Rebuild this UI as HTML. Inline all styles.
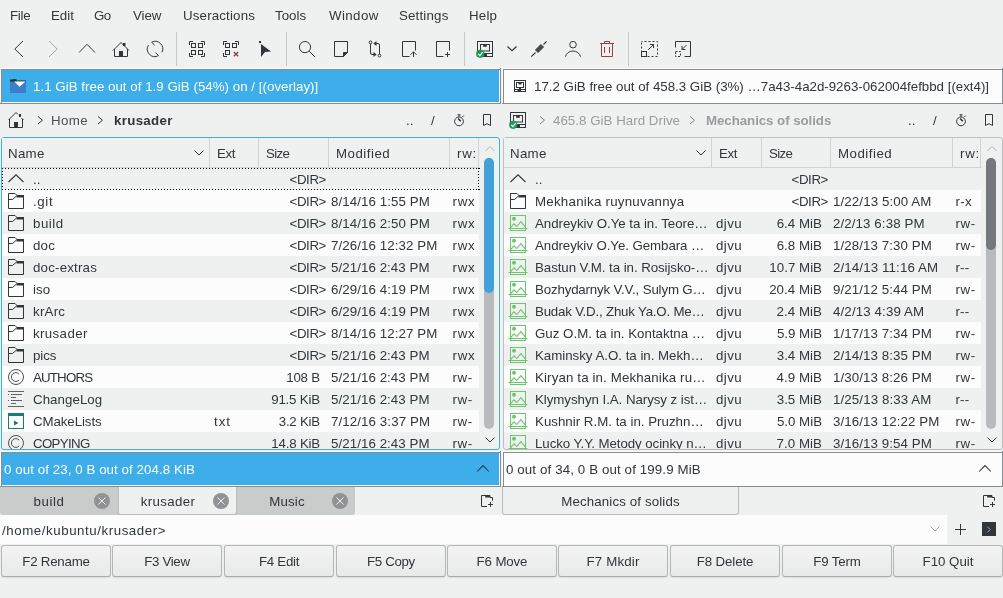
<!DOCTYPE html>
<html><head><meta charset="utf-8">
<style>
html,body{margin:0;padding:0;}
body{width:1003px;height:598px;overflow:hidden;position:relative;background:#eff1f0;
font-family:"Liberation Sans",sans-serif;font-size:13.3px;color:#31363b;}
.t{position:absolute;white-space:nowrap;line-height:16px;margin-top:1px;}
#root{position:absolute;left:0;top:0;width:1003px;height:598px;will-change:transform;}
.r{text-align:right;}
svg{position:absolute;overflow:visible;}
</style></head><body><div id="root">

<div class="t" style="left:10px;top:7px;letter-spacing:-0.295px;">File</div>
<div class="t" style="left:51px;top:7px;letter-spacing:-0.002px;">Edit</div>
<div class="t" style="left:94px;top:7px;letter-spacing:-0.681px;">Go</div>
<div class="t" style="left:133px;top:7px;letter-spacing:-0.080px;">View</div>
<div class="t" style="left:183px;top:7px;letter-spacing:0.167px;">Useractions</div>
<div class="t" style="left:275px;top:7px;letter-spacing:0.020px;">Tools</div>
<div class="t" style="left:329px;top:7px;letter-spacing:0.396px;">Window</div>
<div class="t" style="left:399px;top:7px;letter-spacing:0.178px;">Settings</div>
<div class="t" style="left:469px;top:7px;letter-spacing:0.211px;">Help</div>
<svg style="left:0;top:0" width="1003" height="598"><path d="M23 41 L14.8 49 L23 57" fill="none" stroke="#31363b" stroke-width="1"/><path d="M49 41 L57.2 49 L49 57" fill="none" stroke="#a3a6a8" stroke-width="1"/><path d="M79 52.5 L87 44.3 L95 52.5" fill="none" stroke="#31363b" stroke-width="1"/><path d="M113 50.5 L121 42.5 L129 50.5 M114.5 49 V56.5 H127.5 V49" fill="none" stroke="#31363b" stroke-width="1"/><rect x="119" y="51" width="4" height="6" fill="#31363b"/><rect x="123" y="43" width="2.5" height="3" fill="#31363b"/><path d="M148.4 45.2 A7.5 7.5 0 0 0 158.5 55.6 L155.6 52.6 M161.9 52.3 A7.5 7.5 0 0 0 151.6 42.3 L154.5 45" fill="none" stroke="#31363b" stroke-width="1"/><rect x="176" y="32" width="1" height="34" fill="#c5c7c9"/><rect x="286" y="32" width="1" height="34" fill="#c5c7c9"/><rect x="464" y="32" width="1" height="34" fill="#c5c7c9"/><rect x="628" y="32" width="1" height="34" fill="#c5c7c9"/><path d="M189.5 45 V41.5 H193 M201 41.5 H204.5 V45 M189.5 53 V56.5 H193" fill="none" stroke="#31363b" stroke-width="1"/><path d="M201 56.5 H204.5 V53" fill="none" stroke="#31363b" stroke-width="1"/><rect x="191.5" y="43.5" width="4" height="4" fill="none" stroke="#31363b" stroke-width="1"/><rect x="198.5" y="43.5" width="4" height="4" fill="none" stroke="#31363b" stroke-width="1"/><rect x="191.5" y="50.5" width="4" height="4" fill="none" stroke="#31363b" stroke-width="1"/><rect x="198.5" y="50.5" width="4" height="4" fill="none" stroke="#31363b" stroke-width="1"/><path d="M223.5 45 V41.5 H227 M235 41.5 H238.5 V45 M223.5 53 V56.5 H227" fill="none" stroke="#31363b" stroke-width="1"/><rect x="225.5" y="43.5" width="4" height="4" fill="none" stroke="#31363b" stroke-width="1"/><rect x="232.5" y="43.5" width="4" height="4" fill="none" stroke="#31363b" stroke-width="1"/><rect x="225.5" y="50.5" width="4" height="4" fill="none" stroke="#31363b" stroke-width="1"/><path d="M233.8 52 L238.2 56.2 M238.2 52 L233.8 56.2" stroke="#9b3139" stroke-width="1.2"/><rect x="259" y="41" width="2" height="2" fill="#31363b"/><path d="M261 44 L271 51.5 L265 52 L261 57 Z" fill="#31363b"/><circle cx="305" cy="47.1" r="5.6" fill="none" stroke="#31363b" stroke-width="1"/><path d="M309.2 51.2 L315 57" fill="none" stroke="#31363b" stroke-width="1"/><path d="M334.5 41.5 H347.5 V52.5 L343.5 56.5 H334.5 Z" fill="none" stroke="#31363b" stroke-width="1"/><path d="M343.5 56.5 V52.5 H347.5 Z" fill="#31363b" stroke="#31363b" stroke-width="1"/><circle cx="370.5" cy="42.3" r="1.4" fill="none" stroke="#31363b" stroke-width="1"/><path d="M370.5 43.8 V53 Q370.5 54.5 372 54.5 H374" fill="none" stroke="#31363b" stroke-width="1"/><path d="M373.5 52 L376.7 54.5 L373.5 57 Z" fill="#31363b"/><circle cx="379.5" cy="55.6" r="1.4" fill="none" stroke="#31363b" stroke-width="1"/><path d="M379.5 54.2 V45 Q379.5 43.5 378 43.5 H376" fill="none" stroke="#31363b" stroke-width="1"/><path d="M376.5 41 L373.3 43.5 L376.5 46 Z" fill="#31363b"/><path d="M409.5 56.5 H402.5 V41.5 H415.5 V50.5 M413.5 57 V51.8 M410.5 54.8 L413.5 51.8 L416.5 54.8" fill="none" stroke="#31363b" stroke-width="1"/><path d="M443.5 56.5 H436.5 V41.5 H449.5 V50.5 M447.5 52 V57 M445 54.5 H450" fill="none" stroke="#31363b" stroke-width="1"/><rect x="477.5" y="41.5" width="15" height="15" fill="none" stroke="#31363b" stroke-width="1"/><rect x="480.5" y="44.5" width="9" height="6.5" fill="none" stroke="#31363b" stroke-width="1"/><rect x="483.2" y="44.5" width="3.6" height="2.3" fill="#31363b"/><path d="M477.5 53.5 H492.5" fill="none" stroke="#31363b" stroke-width="1"/><rect x="482" y="54" width="5" height="2" fill="#31363b"/><circle cx="480.2" cy="53.8" r="4.1" fill="#1e9a58"/><path d="M478.2 53.9 L479.9 55.6 L482.6 52.2" fill="none" stroke="#f4f4f4" stroke-width="1.3"/><path d="M507.5 46.5 L512 50.7 L516.5 46.5" fill="none" stroke="#31363b" stroke-width="1.2"/><path d="M531.3 56.7 L535.5 52.5 M543.5 44.5 L546.6 41.3" fill="none" stroke="#31363b" stroke-width="1.1"/><path d="M544.1 47.1 L540.9 43.9 L534.9 49.9 L538.1 53.1 Z" fill="#474b4f"/><circle cx="573" cy="44.7" r="3.3" fill="none" stroke="#31363b" stroke-width="1"/><path d="M565.5 56.7 A7.6 6.8 0 0 1 580.5 56.7" fill="none" stroke="#31363b" stroke-width="1"/><path d="M600 43.5 H614 M604.5 43.5 V41.5 H609.5 V43.5 M601.5 43.5 V56.5 H612.5 V43.5 M604.5 47 V53 M609.5 47 V53" fill="none" stroke="#a0394a" stroke-width="1"/><path d="M641.5 41.5 H657.5 V56.5 H641.5 Z" fill="none" stroke="#31363b" stroke-dasharray="2 2" stroke-dashoffset="1"/><rect x="641.5" y="51.5" width="5" height="5" fill="none" stroke="#31363b" stroke-width="1"/><path d="M648.3 49.7 L653.3 44.7 M650 44.5 H653.5 V48" fill="none" stroke="#31363b" stroke-width="1"/><path d="M675.5 47.5 V41.5 H690.5 V56.5 H684.5" fill="none" stroke="#31363b" stroke-width="1"/><rect x="675.5" y="51.5" width="5" height="5" fill="none" stroke="#31363b" stroke-dasharray="2 1.5"/><path d="M686.5 45 L682 49.5 M682 46 V49.5 H685.5" fill="none" stroke="#31363b" stroke-width="1"/></svg>
<div style="position:absolute;left:0px;top:68px;width:501px;height:36px;background:#fcfcfc"></div>
<div style="position:absolute;left:500px;top:68px;width:1px;height:36px;background:#898c8f"></div>
<div style="position:absolute;left:0px;top:103px;width:501px;height:1px;background:#898c8f"></div>
<div style="position:absolute;left:1px;top:69px;width:499px;height:1px;background:#898c8f"></div>
<div style="position:absolute;left:1px;top:69px;width:1px;height:34px;background:#898c8f"></div>
<div style="position:absolute;left:2px;top:70px;width:497px;height:32px;background:#3daee9"></div>
<svg style="left:0;top:0" width="1003" height="598"><rect x="10" y="81" width="16" height="12" fill="#3b7ec9"/><rect x="10" y="79" width="6.5" height="2" fill="#1f3d3f"/><rect x="10" y="79" width="3" height="1" fill="#16806a"/><rect x="10" y="80.5" width="16" height="1" fill="#24282b"/><path d="M14.3 81.5 H25.5 L19.6 86.8 Z" fill="#fcfcfc"/></svg>
<div class="t" style="left:33px;top:78px;letter-spacing:0.029px;color:#fcfcfc">1.1 GiB free out of 1.9 GiB (54%) on / [(overlay)]</div>
<div style="position:absolute;left:502px;top:68px;width:501px;height:36px;background:#fcfcfc"></div>
<div style="position:absolute;left:1002px;top:68px;width:1px;height:36px;background:#898c8f"></div>
<div style="position:absolute;left:502px;top:103px;width:501px;height:1px;background:#898c8f"></div>
<div style="position:absolute;left:503px;top:69px;width:499px;height:1px;background:#898c8f"></div>
<div style="position:absolute;left:503px;top:69px;width:1px;height:34px;background:#898c8f"></div>
<div style="position:absolute;left:504px;top:70px;width:497px;height:32px;background:#fcfcfc"></div>
<svg style="left:0;top:0" width="1003" height="598"><rect x="514.5" y="80.5" width="11" height="11" fill="none" stroke="#31363b" stroke-width="1"/><rect x="516.5" y="82.5" width="7" height="5" fill="none" stroke="#31363b" stroke-width="1"/><rect x="518.5" y="82.5" width="3" height="2" fill="#31363b"/><path d="M514.5 89.5 H525.5" fill="none" stroke="#31363b" stroke-width="1"/><rect x="517.5" y="90" width="3.5" height="1.5" fill="#31363b"/><path d="M519 88 L520 89 L521 88" fill="none" stroke="#31363b" stroke-width="1"/></svg>
<div class="t" style="left:534px;top:78px;letter-spacing:-0.004px;">17.2 GiB free out of 458.3 GiB (3%) …7a43-4a2d-9263-062004fefbbd [(ext4)]</div>
<svg style="left:0;top:0" width="1003" height="598"><path d="M8.5 120 L16 112.5 L18 114.5 M21.5 118 L23.5 120 M9.5 119 V127.5 H22.5 V119" fill="none" stroke="#31363b" stroke-width="1"/><rect x="14" y="122" width="4" height="6" fill="#31363b"/><rect x="19" y="114" width="2" height="3" fill="#31363b"/><path d="M38 116.5 L42.5 120.2 L38 124" fill="none" stroke="#31363b" stroke-width="1"/><path d="M98 116.5 L102.5 120.2 L98 124" fill="none" stroke="#31363b" stroke-width="1"/><circle cx="459" cy="121.4" r="4.4" fill="none" stroke="#31363b" stroke-width="1"/><path d="M457.5 114.8 H460.5 M459 114.8 V116.8 M462.3 117 L463.8 115.5" fill="none" stroke="#31363b" stroke-width="1"/><path d="M458.2 118.6 L460.8 121.2" stroke="#31363b" stroke-width="1.6"/><path d="M483.5 114.5 H490.5 V125.5 L487 123.7 L483.5 125.5 Z" fill="none" stroke="#31363b" stroke-width="1"/><circle cx="961" cy="121.4" r="4.4" fill="none" stroke="#31363b" stroke-width="1"/><path d="M959.5 114.8 H962.5 M961 114.8 V116.8 M964.3 117 L965.8 115.5" fill="none" stroke="#31363b" stroke-width="1"/><path d="M960.2 118.6 L962.8 121.2" stroke="#31363b" stroke-width="1.6"/><path d="M985.5 114.5 H992.5 V125.5 L989 123.7 L985.5 125.5 Z" fill="none" stroke="#31363b" stroke-width="1"/><rect x="510.5" y="112.5" width="15" height="15" fill="none" stroke="#31363b" stroke-width="1"/><rect x="513.5" y="115.5" width="9" height="6.5" fill="none" stroke="#31363b" stroke-width="1"/><rect x="516.2" y="115.5" width="3.6" height="2.3" fill="#31363b"/><path d="M510.5 124.5 H525.5" fill="none" stroke="#31363b" stroke-width="1"/><rect x="515" y="125" width="5" height="2" fill="#31363b"/><circle cx="513.2" cy="124.8" r="4.1" fill="#1e9a58"/><path d="M511.2 124.9 L512.9 126.6 L515.6 123.2" fill="none" stroke="#f4f4f4" stroke-width="1.3"/><path d="M540 116.5 L544.5 120.2 L540 124" fill="none" stroke="#7f8386"/><path d="M690 116.5 L694.5 120.2 L690 124" fill="none" stroke="#7f8386"/></svg>
<div class="t" style="left:51px;top:112px;letter-spacing:0.422px;color:#4a4f54">Home</div>
<div class="t" style="left:114px;top:112px;letter-spacing:0.314px;"><b>krusader</b></div>
<div class="t" style="left:406px;top:112px;letter-spacing:0.134px;">..</div>
<div class="t" style="left:431px;top:112px;letter-spacing:0.000px;">/</div>
<div class="t" style="left:553px;top:112px;letter-spacing:0.033px;color:#9a9d9f">465.8 GiB Hard Drive</div>
<div class="t" style="left:706px;top:112px;letter-spacing:-0.059px;color:#9a9d9f"><b>Mechanics of solids</b></div>
<div class="t" style="left:908px;top:112px;letter-spacing:0.134px;">..</div>
<div class="t" style="left:933px;top:112px;letter-spacing:0.000px;">/</div>
<div style="position:absolute;left:1px;top:137px;width:499px;height:313px;background:#eff1f0;border:1px solid #3daee9;box-sizing:border-box;border-radius:3px;"></div>
<div style="position:absolute;left:2px;top:138px;width:478px;height:30px;background:#eff1f0;"></div>
<div class="t" style="left:8px;top:145px;letter-spacing:0.313px;">Name</div>
<div style="position:absolute;left:209px;top:138px;width:1px;height:30px;background:#d1d3d4"></div>
<div class="t" style="left:217px;top:145px;letter-spacing:-0.388px;">Ext</div>
<div style="position:absolute;left:258px;top:138px;width:1px;height:30px;background:#d1d3d4"></div>
<div class="t" style="left:266px;top:145px;letter-spacing:-0.690px;">Size</div>
<div style="position:absolute;left:328px;top:138px;width:1px;height:30px;background:#d1d3d4"></div>
<div class="t" style="left:336px;top:145px;letter-spacing:0.496px;">Modified</div>
<div style="position:absolute;left:449px;top:138px;width:1px;height:30px;background:#d1d3d4"></div>
<div class="t" style="left:457px;top:145px;letter-spacing:0.699px;">rw:</div>
<div style="position:absolute;left:478px;top:138px;width:1px;height:30px;background:#d1d3d4"></div>
<svg style="left:194px;top:150px" width="10" height="6" viewBox="0 0 10 6" ><path d="M0.5 0.5 L5 5 L9.5 0.5" fill="none" stroke="#31363b" stroke-width="1"/></svg>
<div style="position:absolute;left:2px;top:167px;width:478px;height:1px;background:#d1d3d4"></div>
<svg style="left:485px;top:146px" width="10" height="6" viewBox="0 0 10 6" ><path d="M0.5 5 L5 0.5 L9.5 5" fill="none" stroke="#b4b6b8" stroke-width="1"/></svg>
<svg style="left:485px;top:437px" width="10" height="6" viewBox="0 0 10 6" ><path d="M0.5 0.5 L5 5 L9.5 0.5" fill="none" stroke="#31363b" stroke-width="1"/></svg>
<div style="position:absolute;left:484px;top:158px;width:10px;height:271px;background:#b9babe;border-radius:5px;"></div>
<div style="position:absolute;left:0;top:0;width:1003px;height:449px;overflow:hidden">
<div style="position:absolute;left:484px;top:158px;width:10px;height:135px;background:#42a2d7;border-radius:5px;"></div>
<svg style="left:8px;top:173px" width="16" height="10" viewBox="0 0 16 10" ><path d="M0.5 9 L8 1.8 L15.5 9" fill="none" stroke="#31363b" stroke-width="1.1"/></svg>
<div class="t" style="left:33px;top:171px;letter-spacing:0.134px;">..</div>
<div class="t r" style="left:259px;width:67px;top:171px;letter-spacing:-0.398px">&lt;DIR&gt;</div>
<div style="position:absolute;left:2px;top:190px;width:477px;height:22px;background:#fcfcfc;"></div>
<svg style="left:8px;top:193px" width="16" height="16" viewBox="0 0 16 16" ><path d="M0.5 15.5 V0.5 H7 L9 2.5 H15.5 V15.5 Z" fill="none" stroke="#31363b" stroke-width="1"/><rect x="8.5" y="2" width="7.5" height="2.5" fill="#31363b"/><path d="M8.5 3 L4.5 6.5 H0.5" fill="none" stroke="#31363b" stroke-width="1"/></svg>
<div class="t" style="left:33px;top:193px;letter-spacing:0.625px;">.git</div>
<div class="t r" style="left:259px;width:67px;top:193px;letter-spacing:-0.398px">&lt;DIR&gt;</div>
<div class="t" style="left:331px;top:193px;letter-spacing:0.088px;">8/14/16 1:55 PM</div>
<div class="t" style="left:452.5px;top:193px;letter-spacing:0.734px;">rwx</div>
<svg style="left:8px;top:215px" width="16" height="16" viewBox="0 0 16 16" ><path d="M0.5 15.5 V0.5 H7 L9 2.5 H15.5 V15.5 Z" fill="none" stroke="#31363b" stroke-width="1"/><rect x="8.5" y="2" width="7.5" height="2.5" fill="#31363b"/><path d="M8.5 3 L4.5 6.5 H0.5" fill="none" stroke="#31363b" stroke-width="1"/></svg>
<div class="t" style="left:33px;top:215px;letter-spacing:0.534px;">build</div>
<div class="t r" style="left:259px;width:67px;top:215px;letter-spacing:-0.398px">&lt;DIR&gt;</div>
<div class="t" style="left:331px;top:215px;letter-spacing:0.088px;">8/14/16 2:50 PM</div>
<div class="t" style="left:452.5px;top:215px;letter-spacing:0.734px;">rwx</div>
<div style="position:absolute;left:2px;top:234px;width:477px;height:22px;background:#fcfcfc;"></div>
<svg style="left:8px;top:237px" width="16" height="16" viewBox="0 0 16 16" ><path d="M0.5 15.5 V0.5 H7 L9 2.5 H15.5 V15.5 Z" fill="none" stroke="#31363b" stroke-width="1"/><rect x="8.5" y="2" width="7.5" height="2.5" fill="#31363b"/><path d="M8.5 3 L4.5 6.5 H0.5" fill="none" stroke="#31363b" stroke-width="1"/></svg>
<div class="t" style="left:33px;top:237px;letter-spacing:0.211px;">doc</div>
<div class="t r" style="left:259px;width:67px;top:237px;letter-spacing:-0.398px">&lt;DIR&gt;</div>
<div class="t" style="left:331px;top:237px;letter-spacing:0.096px;">7/26/16 12:32 PM</div>
<div class="t" style="left:452.5px;top:237px;letter-spacing:0.734px;">rwx</div>
<svg style="left:8px;top:259px" width="16" height="16" viewBox="0 0 16 16" ><path d="M0.5 15.5 V0.5 H7 L9 2.5 H15.5 V15.5 Z" fill="none" stroke="#31363b" stroke-width="1"/><rect x="8.5" y="2" width="7.5" height="2.5" fill="#31363b"/><path d="M8.5 3 L4.5 6.5 H0.5" fill="none" stroke="#31363b" stroke-width="1"/></svg>
<div class="t" style="left:33px;top:259px;letter-spacing:0.192px;">doc-extras</div>
<div class="t r" style="left:259px;width:67px;top:259px;letter-spacing:-0.398px">&lt;DIR&gt;</div>
<div class="t" style="left:331px;top:259px;letter-spacing:0.072px;">5/21/16 2:43 PM</div>
<div class="t" style="left:452.5px;top:259px;letter-spacing:0.734px;">rwx</div>
<div style="position:absolute;left:2px;top:278px;width:477px;height:22px;background:#fcfcfc;"></div>
<svg style="left:8px;top:281px" width="16" height="16" viewBox="0 0 16 16" ><path d="M0.5 15.5 V0.5 H7 L9 2.5 H15.5 V15.5 Z" fill="none" stroke="#31363b" stroke-width="1"/><rect x="8.5" y="2" width="7.5" height="2.5" fill="#31363b"/><path d="M8.5 3 L4.5 6.5 H0.5" fill="none" stroke="#31363b" stroke-width="1"/></svg>
<div class="t" style="left:33px;top:281px;letter-spacing:0.088px;">iso</div>
<div class="t r" style="left:259px;width:67px;top:281px;letter-spacing:-0.398px">&lt;DIR&gt;</div>
<div class="t" style="left:331px;top:281px;letter-spacing:0.089px;">6/29/16 4:19 PM</div>
<div class="t" style="left:452.5px;top:281px;letter-spacing:0.734px;">rwx</div>
<svg style="left:8px;top:303px" width="16" height="16" viewBox="0 0 16 16" ><path d="M0.5 15.5 V0.5 H7 L9 2.5 H15.5 V15.5 Z" fill="none" stroke="#31363b" stroke-width="1"/><rect x="8.5" y="2" width="7.5" height="2.5" fill="#31363b"/><path d="M8.5 3 L4.5 6.5 H0.5" fill="none" stroke="#31363b" stroke-width="1"/></svg>
<div class="t" style="left:33px;top:303px;letter-spacing:0.228px;">krArc</div>
<div class="t r" style="left:259px;width:67px;top:303px;letter-spacing:-0.398px">&lt;DIR&gt;</div>
<div class="t" style="left:331px;top:303px;letter-spacing:0.089px;">6/29/16 4:19 PM</div>
<div class="t" style="left:452.5px;top:303px;letter-spacing:0.734px;">rwx</div>
<div style="position:absolute;left:2px;top:322px;width:477px;height:22px;background:#fcfcfc;"></div>
<svg style="left:8px;top:325px" width="16" height="16" viewBox="0 0 16 16" ><path d="M0.5 15.5 V0.5 H7 L9 2.5 H15.5 V15.5 Z" fill="none" stroke="#31363b" stroke-width="1"/><rect x="8.5" y="2" width="7.5" height="2.5" fill="#31363b"/><path d="M8.5 3 L4.5 6.5 H0.5" fill="none" stroke="#31363b" stroke-width="1"/></svg>
<div class="t" style="left:33px;top:325px;letter-spacing:0.376px;">krusader</div>
<div class="t r" style="left:259px;width:67px;top:325px;letter-spacing:-0.398px">&lt;DIR&gt;</div>
<div class="t" style="left:331px;top:325px;letter-spacing:0.085px;">8/14/16 12:27 PM</div>
<div class="t" style="left:452.5px;top:325px;letter-spacing:0.734px;">rwx</div>
<svg style="left:8px;top:347px" width="16" height="16" viewBox="0 0 16 16" ><path d="M0.5 15.5 V0.5 H7 L9 2.5 H15.5 V15.5 Z" fill="none" stroke="#31363b" stroke-width="1"/><rect x="8.5" y="2" width="7.5" height="2.5" fill="#31363b"/><path d="M8.5 3 L4.5 6.5 H0.5" fill="none" stroke="#31363b" stroke-width="1"/></svg>
<div class="t" style="left:33px;top:347px;letter-spacing:-0.063px;">pics</div>
<div class="t r" style="left:259px;width:67px;top:347px;letter-spacing:-0.398px">&lt;DIR&gt;</div>
<div class="t" style="left:331px;top:347px;letter-spacing:0.072px;">5/21/16 2:43 PM</div>
<div class="t" style="left:452.5px;top:347px;letter-spacing:0.734px;">rwx</div>
<div style="position:absolute;left:2px;top:366px;width:477px;height:22px;background:#fcfcfc;"></div>
<svg style="left:8px;top:369px" width="16" height="16" viewBox="0 0 16 16" ><circle cx="8" cy="8" r="7.5" fill="none" stroke="#4d5256" stroke-width="1"/><path d="M11.1 5.1 A4.4 4.4 0 1 0 11.1 10.9" fill="none" stroke="#4d5256" stroke-width="1"/></svg>
<div class="t" style="left:33px;top:369px;letter-spacing:-0.826px;">AUTHORS</div>
<div class="t r" style="left:259px;width:61px;top:369px;letter-spacing:-0.191px">108 B</div>
<div class="t" style="left:331px;top:369px;letter-spacing:0.072px;">5/21/16 2:43 PM</div>
<div class="t" style="left:452.5px;top:369px;letter-spacing:0.580px;">rw-</div>
<svg style="left:8px;top:391px" width="16" height="16" viewBox="0 0 16 16" ><path d="M0 0.5 H16 M3 3.5 H14 M3 6.5 H8 M3 9.5 H14 M3 12.5 H8 M0 15.5 H16" stroke="#5f6367" stroke-width="1"/><path d="M0 3.5 H1 M0 9.5 H1" stroke="#5f6367" stroke-width="1"/></svg>
<div class="t" style="left:33px;top:391px;letter-spacing:0.054px;">ChangeLog</div>
<div class="t r" style="left:259px;width:61px;top:391px;letter-spacing:-0.183px">91.5 KiB</div>
<div class="t" style="left:331px;top:391px;letter-spacing:0.072px;">5/21/16 2:43 PM</div>
<div class="t" style="left:452.5px;top:391px;letter-spacing:0.580px;">rw-</div>
<div style="position:absolute;left:2px;top:410px;width:477px;height:22px;background:#fcfcfc;"></div>
<svg style="left:8px;top:413px" width="16" height="16" viewBox="0 0 16 16" ><rect x="0.5" y="0.5" width="15" height="15" fill="none" stroke="#177c6a" stroke-width="1"/><rect x="0" y="0" width="16" height="3" fill="#177c6a"/><path d="M6 7.5 L10.5 10 L6 12.5 Z" fill="#177c6a"/></svg>
<div class="t" style="left:33px;top:413px;letter-spacing:-0.090px;">CMakeLists</div>
<div class="t" style="left:214px;top:413px;letter-spacing:1.014px;">txt</div>
<div class="t r" style="left:259px;width:61px;top:413px;letter-spacing:-0.229px">3.2 KiB</div>
<div class="t" style="left:331px;top:413px;letter-spacing:0.100px;">7/12/16 3:37 PM</div>
<div class="t" style="left:452.5px;top:413px;letter-spacing:0.580px;">rw-</div>
<svg style="left:8px;top:435px" width="16" height="16" viewBox="0 0 16 16" ><circle cx="8" cy="8" r="7.5" fill="none" stroke="#4d5256" stroke-width="1"/><path d="M11.1 5.1 A4.4 4.4 0 1 0 11.1 10.9" fill="none" stroke="#4d5256" stroke-width="1"/></svg>
<div class="t" style="left:33px;top:435px;letter-spacing:-0.680px;">COPYING</div>
<div class="t r" style="left:259px;width:61px;top:435px;letter-spacing:-0.200px">14.8 KiB</div>
<div class="t" style="left:331px;top:435px;letter-spacing:0.072px;">5/21/16 2:43 PM</div>
<div class="t" style="left:452.5px;top:435px;letter-spacing:0.580px;">rw-</div>
</div>
<svg style="left:0;top:0" width="1003" height="598"><path d="M2 168.5 H480 M2 189.5 H480 M2.5 168 V190 M478.5 168 V190" fill="none" stroke="#000" stroke-width="1" stroke-dasharray="1 2"/></svg>
<div style="position:absolute;left:503px;top:137px;width:500px;height:313px;background:#eff1f0;border:1px solid #bcbebf;box-sizing:border-box;border-radius:3px;"></div>
<div style="position:absolute;left:504px;top:138px;width:478px;height:30px;background:#eff1f0;"></div>
<div class="t" style="left:510px;top:145px;letter-spacing:0.313px;">Name</div>
<div style="position:absolute;left:711px;top:138px;width:1px;height:30px;background:#d1d3d4"></div>
<div class="t" style="left:719px;top:145px;letter-spacing:-0.388px;">Ext</div>
<div style="position:absolute;left:761px;top:138px;width:1px;height:30px;background:#d1d3d4"></div>
<div class="t" style="left:769px;top:145px;letter-spacing:-0.690px;">Size</div>
<div style="position:absolute;left:830px;top:138px;width:1px;height:30px;background:#d1d3d4"></div>
<div class="t" style="left:838px;top:145px;letter-spacing:0.496px;">Modified</div>
<div style="position:absolute;left:952px;top:138px;width:1px;height:30px;background:#d1d3d4"></div>
<div class="t" style="left:960px;top:145px;letter-spacing:0.699px;">rw:</div>
<div style="position:absolute;left:980px;top:138px;width:1px;height:30px;background:#d1d3d4"></div>
<svg style="left:696px;top:150px" width="10" height="6" viewBox="0 0 10 6" ><path d="M0.5 0.5 L5 5 L9.5 0.5" fill="none" stroke="#31363b" stroke-width="1"/></svg>
<div style="position:absolute;left:504px;top:167px;width:478px;height:1px;background:#d1d3d4"></div>
<svg style="left:987px;top:146px" width="10" height="6" viewBox="0 0 10 6" ><path d="M0.5 5 L5 0.5 L9.5 5" fill="none" stroke="#b4b6b8" stroke-width="1"/></svg>
<svg style="left:987px;top:437px" width="10" height="6" viewBox="0 0 10 6" ><path d="M0.5 0.5 L5 5 L9.5 0.5" fill="none" stroke="#31363b" stroke-width="1"/></svg>
<div style="position:absolute;left:986px;top:158px;width:10px;height:271px;background:#b9babe;border-radius:5px;"></div>
<div style="position:absolute;left:0;top:0;width:1003px;height:449px;overflow:hidden">
<div style="position:absolute;left:986px;top:158px;width:10px;height:92px;background:#74787e;border-radius:5px;"></div>
<svg style="left:510px;top:173px" width="16" height="10" viewBox="0 0 16 10" ><path d="M0.5 9 L8 1.8 L15.5 9" fill="none" stroke="#31363b" stroke-width="1.1"/></svg>
<div class="t" style="left:535px;top:171px;letter-spacing:0.134px;">..</div>
<div class="t r" style="left:762px;width:66px;top:171px;letter-spacing:-0.398px">&lt;DIR&gt;</div>
<div style="position:absolute;left:504px;top:190px;width:477px;height:22px;background:#fcfcfc;"></div>
<svg style="left:510px;top:193px" width="16" height="16" viewBox="0 0 16 16" ><path d="M0.5 15.5 V0.5 H7 L9 2.5 H15.5 V15.5 Z" fill="none" stroke="#31363b" stroke-width="1"/><rect x="8.5" y="2" width="7.5" height="2.5" fill="#31363b"/><path d="M8.5 3 L4.5 6.5 H0.5" fill="none" stroke="#31363b" stroke-width="1"/></svg>
<div class="t" style="left:535px;top:193px;letter-spacing:0.250px;">Mekhanika ruynuvannya</div>
<div class="t r" style="left:762px;width:66px;top:193px;letter-spacing:-0.398px">&lt;DIR&gt;</div>
<div class="t" style="left:833px;top:193px;letter-spacing:0.113px;">1/22/13 5:00 AM</div>
<div class="t" style="left:955.5px;top:193px;letter-spacing:0.306px;">r-x</div>
<svg style="left:510px;top:215px" width="16" height="16" viewBox="0 0 16 16" ><rect x="0.5" y="0.5" width="15" height="15" fill="none" stroke="#6fc46f" stroke-width="1"/><circle cx="4" cy="3.8" r="2" fill="#6fc46f"/><path d="M0.5 12.8 L3.9 8.8 L6.8 11.5 L10.9 6.6 L15.5 12.2" fill="none" stroke="#6fc46f" stroke-width="1.1"/><path d="M-1.5 13.5 H17.5" stroke="#6fc46f" stroke-width="1"/></svg>
<div class="t" style="left:535px;top:215px;letter-spacing:-0.040px;">Andreykiv O.Ye ta in. Teore…</div>
<div class="t" style="left:716px;top:215px;letter-spacing:0.403px;">djvu</div>
<div class="t r" style="left:762px;width:60px;top:215px;letter-spacing:0.034px">6.4 MiB</div>
<div class="t" style="left:833px;top:215px;letter-spacing:0.100px;">2/2/13 6:38 PM</div>
<div class="t" style="left:955.5px;top:215px;letter-spacing:0.580px;">rw-</div>
<div style="position:absolute;left:504px;top:234px;width:477px;height:22px;background:#fcfcfc;"></div>
<svg style="left:510px;top:237px" width="16" height="16" viewBox="0 0 16 16" ><rect x="0.5" y="0.5" width="15" height="15" fill="none" stroke="#6fc46f" stroke-width="1"/><circle cx="4" cy="3.8" r="2" fill="#6fc46f"/><path d="M0.5 12.8 L3.9 8.8 L6.8 11.5 L10.9 6.6 L15.5 12.2" fill="none" stroke="#6fc46f" stroke-width="1.1"/><path d="M-1.5 13.5 H17.5" stroke="#6fc46f" stroke-width="1"/></svg>
<div class="t" style="left:535px;top:237px;letter-spacing:-0.068px;">Andreykiv O.Ye. Gembara …</div>
<div class="t" style="left:716px;top:237px;letter-spacing:0.403px;">djvu</div>
<div class="t r" style="left:762px;width:60px;top:237px;letter-spacing:0.034px">6.8 MiB</div>
<div class="t" style="left:833px;top:237px;letter-spacing:0.082px;">1/28/13 7:30 PM</div>
<div class="t" style="left:955.5px;top:237px;letter-spacing:0.580px;">rw-</div>
<svg style="left:510px;top:259px" width="16" height="16" viewBox="0 0 16 16" ><rect x="0.5" y="0.5" width="15" height="15" fill="none" stroke="#6fc46f" stroke-width="1"/><circle cx="4" cy="3.8" r="2" fill="#6fc46f"/><path d="M0.5 12.8 L3.9 8.8 L6.8 11.5 L10.9 6.6 L15.5 12.2" fill="none" stroke="#6fc46f" stroke-width="1.1"/><path d="M-1.5 13.5 H17.5" stroke="#6fc46f" stroke-width="1"/></svg>
<div class="t" style="left:535px;top:259px;letter-spacing:-0.068px;">Bastun V.M. ta in. Rosijsko-…</div>
<div class="t" style="left:716px;top:259px;letter-spacing:0.403px;">djvu</div>
<div class="t r" style="left:762px;width:60px;top:259px;letter-spacing:0.020px">10.7 MiB</div>
<div class="t" style="left:833px;top:259px;letter-spacing:0.121px;">2/14/13 11:16 AM</div>
<div class="t" style="left:955.5px;top:259px;letter-spacing:0.152px;">r--</div>
<div style="position:absolute;left:504px;top:278px;width:477px;height:22px;background:#fcfcfc;"></div>
<svg style="left:510px;top:281px" width="16" height="16" viewBox="0 0 16 16" ><rect x="0.5" y="0.5" width="15" height="15" fill="none" stroke="#6fc46f" stroke-width="1"/><circle cx="4" cy="3.8" r="2" fill="#6fc46f"/><path d="M0.5 12.8 L3.9 8.8 L6.8 11.5 L10.9 6.6 L15.5 12.2" fill="none" stroke="#6fc46f" stroke-width="1.1"/><path d="M-1.5 13.5 H17.5" stroke="#6fc46f" stroke-width="1"/></svg>
<div class="t" style="left:535px;top:281px;letter-spacing:-0.164px;">Bozhydarnyk V.V., Sulym G…</div>
<div class="t" style="left:716px;top:281px;letter-spacing:0.403px;">djvu</div>
<div class="t r" style="left:762px;width:60px;top:281px;letter-spacing:0.047px">20.4 MiB</div>
<div class="t" style="left:833px;top:281px;letter-spacing:0.090px;">9/21/12 5:44 PM</div>
<div class="t" style="left:955.5px;top:281px;letter-spacing:0.580px;">rw-</div>
<svg style="left:510px;top:303px" width="16" height="16" viewBox="0 0 16 16" ><rect x="0.5" y="0.5" width="15" height="15" fill="none" stroke="#6fc46f" stroke-width="1"/><circle cx="4" cy="3.8" r="2" fill="#6fc46f"/><path d="M0.5 12.8 L3.9 8.8 L6.8 11.5 L10.9 6.6 L15.5 12.2" fill="none" stroke="#6fc46f" stroke-width="1.1"/><path d="M-1.5 13.5 H17.5" stroke="#6fc46f" stroke-width="1"/></svg>
<div class="t" style="left:535px;top:303px;letter-spacing:-0.204px;">Budak V.D., Zhuk Ya.O. Me…</div>
<div class="t" style="left:716px;top:303px;letter-spacing:0.403px;">djvu</div>
<div class="t r" style="left:762px;width:60px;top:303px;letter-spacing:0.048px">2.4 MiB</div>
<div class="t" style="left:833px;top:303px;letter-spacing:0.133px;">4/2/13 4:39 AM</div>
<div class="t" style="left:955.5px;top:303px;letter-spacing:0.152px;">r--</div>
<div style="position:absolute;left:504px;top:322px;width:477px;height:22px;background:#fcfcfc;"></div>
<svg style="left:510px;top:325px" width="16" height="16" viewBox="0 0 16 16" ><rect x="0.5" y="0.5" width="15" height="15" fill="none" stroke="#6fc46f" stroke-width="1"/><circle cx="4" cy="3.8" r="2" fill="#6fc46f"/><path d="M0.5 12.8 L3.9 8.8 L6.8 11.5 L10.9 6.6 L15.5 12.2" fill="none" stroke="#6fc46f" stroke-width="1.1"/><path d="M-1.5 13.5 H17.5" stroke="#6fc46f" stroke-width="1"/></svg>
<div class="t" style="left:535px;top:325px;letter-spacing:0.007px;">Guz O.M. ta in. Kontaktna …</div>
<div class="t" style="left:716px;top:325px;letter-spacing:0.403px;">djvu</div>
<div class="t r" style="left:762px;width:60px;top:325px;letter-spacing:-0.007px">5.9 MiB</div>
<div class="t" style="left:833px;top:325px;letter-spacing:0.082px;">1/17/13 7:34 PM</div>
<div class="t" style="left:955.5px;top:325px;letter-spacing:0.580px;">rw-</div>
<svg style="left:510px;top:347px" width="16" height="16" viewBox="0 0 16 16" ><rect x="0.5" y="0.5" width="15" height="15" fill="none" stroke="#6fc46f" stroke-width="1"/><circle cx="4" cy="3.8" r="2" fill="#6fc46f"/><path d="M0.5 12.8 L3.9 8.8 L6.8 11.5 L10.9 6.6 L15.5 12.2" fill="none" stroke="#6fc46f" stroke-width="1.1"/><path d="M-1.5 13.5 H17.5" stroke="#6fc46f" stroke-width="1"/></svg>
<div class="t" style="left:535px;top:347px;letter-spacing:-0.017px;">Kaminsky A.O. ta in. Mekh…</div>
<div class="t" style="left:716px;top:347px;letter-spacing:0.403px;">djvu</div>
<div class="t r" style="left:762px;width:60px;top:347px;letter-spacing:0.027px">3.4 MiB</div>
<div class="t" style="left:833px;top:347px;letter-spacing:0.095px;">2/14/13 8:35 PM</div>
<div class="t" style="left:955.5px;top:347px;letter-spacing:0.580px;">rw-</div>
<div style="position:absolute;left:504px;top:366px;width:477px;height:22px;background:#fcfcfc;"></div>
<svg style="left:510px;top:369px" width="16" height="16" viewBox="0 0 16 16" ><rect x="0.5" y="0.5" width="15" height="15" fill="none" stroke="#6fc46f" stroke-width="1"/><circle cx="4" cy="3.8" r="2" fill="#6fc46f"/><path d="M0.5 12.8 L3.9 8.8 L6.8 11.5 L10.9 6.6 L15.5 12.2" fill="none" stroke="#6fc46f" stroke-width="1.1"/><path d="M-1.5 13.5 H17.5" stroke="#6fc46f" stroke-width="1"/></svg>
<div class="t" style="left:535px;top:369px;letter-spacing:0.132px;">Kiryan ta in. Mekhanika ru…</div>
<div class="t" style="left:716px;top:369px;letter-spacing:0.403px;">djvu</div>
<div class="t r" style="left:762px;width:60px;top:369px;letter-spacing:0.046px">4.9 MiB</div>
<div class="t" style="left:833px;top:369px;letter-spacing:0.082px;">1/30/13 8:26 PM</div>
<div class="t" style="left:955.5px;top:369px;letter-spacing:0.580px;">rw-</div>
<svg style="left:510px;top:391px" width="16" height="16" viewBox="0 0 16 16" ><rect x="0.5" y="0.5" width="15" height="15" fill="none" stroke="#6fc46f" stroke-width="1"/><circle cx="4" cy="3.8" r="2" fill="#6fc46f"/><path d="M0.5 12.8 L3.9 8.8 L6.8 11.5 L10.9 6.6 L15.5 12.2" fill="none" stroke="#6fc46f" stroke-width="1.1"/><path d="M-1.5 13.5 H17.5" stroke="#6fc46f" stroke-width="1"/></svg>
<div class="t" style="left:535px;top:391px;letter-spacing:-0.049px;">Klymyshyn I.A. Narysy z ist…</div>
<div class="t" style="left:716px;top:391px;letter-spacing:0.403px;">djvu</div>
<div class="t r" style="left:762px;width:60px;top:391px;letter-spacing:0.027px">3.5 MiB</div>
<div class="t" style="left:833px;top:391px;letter-spacing:0.113px;">1/25/13 8:33 AM</div>
<div class="t" style="left:955.5px;top:391px;letter-spacing:0.152px;">r--</div>
<div style="position:absolute;left:504px;top:410px;width:477px;height:22px;background:#fcfcfc;"></div>
<svg style="left:510px;top:413px" width="16" height="16" viewBox="0 0 16 16" ><rect x="0.5" y="0.5" width="15" height="15" fill="none" stroke="#6fc46f" stroke-width="1"/><circle cx="4" cy="3.8" r="2" fill="#6fc46f"/><path d="M0.5 12.8 L3.9 8.8 L6.8 11.5 L10.9 6.6 L15.5 12.2" fill="none" stroke="#6fc46f" stroke-width="1.1"/><path d="M-1.5 13.5 H17.5" stroke="#6fc46f" stroke-width="1"/></svg>
<div class="t" style="left:535px;top:413px;letter-spacing:0.008px;">Kushnir R.M. ta in. Pruzhn…</div>
<div class="t" style="left:716px;top:413px;letter-spacing:0.403px;">djvu</div>
<div class="t r" style="left:762px;width:60px;top:413px;letter-spacing:-0.007px">5.0 MiB</div>
<div class="t" style="left:833px;top:413px;letter-spacing:0.083px;">3/16/13 12:22 PM</div>
<div class="t" style="left:955.5px;top:413px;letter-spacing:0.580px;">rw-</div>
<svg style="left:510px;top:435px" width="16" height="16" viewBox="0 0 16 16" ><rect x="0.5" y="0.5" width="15" height="15" fill="none" stroke="#6fc46f" stroke-width="1"/><circle cx="4" cy="3.8" r="2" fill="#6fc46f"/><path d="M0.5 12.8 L3.9 8.8 L6.8 11.5 L10.9 6.6 L15.5 12.2" fill="none" stroke="#6fc46f" stroke-width="1.1"/><path d="M-1.5 13.5 H17.5" stroke="#6fc46f" stroke-width="1"/></svg>
<div class="t" style="left:535px;top:435px;letter-spacing:-0.074px;">Lucko Y.Y. Metody ocinky n…</div>
<div class="t" style="left:716px;top:435px;letter-spacing:0.403px;">djvu</div>
<div class="t r" style="left:762px;width:60px;top:435px;letter-spacing:0.059px">7.0 MiB</div>
<div class="t" style="left:833px;top:435px;letter-spacing:0.087px;">3/16/13 9:54 PM</div>
<div class="t" style="left:955.5px;top:435px;letter-spacing:0.580px;">rw-</div>
</div>
<div style="position:absolute;left:0px;top:451px;width:501px;height:36px;background:#fcfcfc"></div>
<div style="position:absolute;left:500px;top:451px;width:1px;height:36px;background:#898c8f"></div>
<div style="position:absolute;left:0px;top:486px;width:501px;height:1px;background:#898c8f"></div>
<div style="position:absolute;left:1px;top:452px;width:499px;height:1px;background:#898c8f"></div>
<div style="position:absolute;left:1px;top:452px;width:1px;height:34px;background:#898c8f"></div>
<div style="position:absolute;left:2px;top:453px;width:497px;height:32px;background:#3daee9"></div>
<div class="t" style="left:4px;top:461px;letter-spacing:0.074px;color:#fcfcfc">0 out of 23, 0 B out of 204.8 KiB</div>
<svg style="left:0;top:0" width="1003" height="598"><path d="M477.2 471.5 L483 465.6 L488.8 471.5" fill="none" stroke="#31363b" stroke-width="1.05"/></svg>
<div style="position:absolute;left:502px;top:451px;width:501px;height:36px;background:#fcfcfc"></div>
<div style="position:absolute;left:1002px;top:451px;width:1px;height:36px;background:#898c8f"></div>
<div style="position:absolute;left:502px;top:486px;width:501px;height:1px;background:#898c8f"></div>
<div style="position:absolute;left:503px;top:452px;width:499px;height:1px;background:#898c8f"></div>
<div style="position:absolute;left:503px;top:452px;width:1px;height:34px;background:#898c8f"></div>
<div style="position:absolute;left:504px;top:453px;width:497px;height:32px;background:#fcfcfc"></div>
<div class="t" style="left:506px;top:461px;letter-spacing:0.122px;">0 out of 34, 0 B out of 199.9 MiB</div>
<svg style="left:0;top:0" width="1003" height="598"><path d="M979.2 471.5 L985 465.6 L990.8 471.5" fill="none" stroke="#31363b" stroke-width="1.05"/></svg>
<div style="position:absolute;left:0px;top:487px;width:355px;height:28px;background:#c8cccb;border-radius:0 0 3px 3px"></div>
<div style="position:absolute;left:118px;top:487px;width:119px;height:28px;background:#eff1f0;border:1px solid #b9bbbd;box-sizing:border-box;border-top:none;border-radius:0 0 3px 3px"></div>
<div class="t" style="left:-1px;width:100px;text-align:center;top:493px;letter-spacing:0.534px">build</div>
<svg style="left:94px;top:493px" width="16" height="16" viewBox="0 0 16 16" ><circle cx="8" cy="8" r="8" fill="#909396"/><path d="M4.5 4.5 L11.5 11.5 M11.5 4.5 L4.5 11.5" stroke="#eceded" stroke-width="1"/></svg>
<div class="t" style="left:118px;width:100px;text-align:center;top:493px;letter-spacing:0.376px">krusader</div>
<svg style="left:213px;top:493px" width="16" height="16" viewBox="0 0 16 16" ><circle cx="8" cy="8" r="8" fill="#909396"/><path d="M4.5 4.5 L11.5 11.5 M11.5 4.5 L4.5 11.5" stroke="#eceded" stroke-width="1"/></svg>
<div class="t" style="left:237px;width:100px;text-align:center;top:493px;letter-spacing:0.167px">Music</div>
<svg style="left:332px;top:493px" width="16" height="16" viewBox="0 0 16 16" ><circle cx="8" cy="8" r="8" fill="#909396"/><path d="M4.5 4.5 L11.5 11.5 M11.5 4.5 L4.5 11.5" stroke="#eceded" stroke-width="1"/></svg>
<svg style="left:0;top:0" width="1003" height="598"><path d="M487 506.5 H481.5 V495.5 H490 V497.5 H492.5 V500.7 M490.5 502 V507 M488 504.5 H493" fill="none" stroke="#31363b" stroke-width="1"/><rect x="485.20000000000005" y="495" width="4.8" height="2.5" fill="#31363b"/></svg>
<div style="position:absolute;left:502px;top:487px;width:237px;height:28px;background:#eff1f0;border:1px solid #b9bbbd;box-sizing:border-box;border-top:none;border-radius:0 0 3px 3px"></div>
<div class="t" style="left:502px;width:237px;text-align:center;top:493px;letter-spacing:0.130px">Mechanics of solids</div>
<svg style="left:0;top:0" width="1003" height="598"><path d="M989 506.5 H983.5 V495.5 H992 V497.5 H994.5 V500.7 M992.5 502 V507 M990 504.5 H995" fill="none" stroke="#31363b" stroke-width="1"/><rect x="987.2" y="495" width="4.8" height="2.5" fill="#31363b"/></svg>
<div style="position:absolute;left:0px;top:515px;width:947px;height:29px;background:#fcfcfc"></div>
<div class="t" style="left:2px;top:522px;letter-spacing:0.560px;">/home/kubuntu/krusader&gt;</div>
<svg style="left:0;top:0" width="1003" height="598"><path d="M930.5 526.5 L935 531 L939.5 526.5" fill="none" stroke="#a4a6a8" stroke-width="1"/><path d="M960.5 524 V535 M955 529.5 H966" fill="none" stroke="#31363b" stroke-width="1"/><rect x="982" y="522" width="14" height="14" fill="#31363b"/><path d="M987.5 526.8 L990.2 529.5 L987.5 532.2" fill="none" stroke="#a9adb1" stroke-width="1"/></svg>
<div style="position:absolute;left:1px;top:545px;width:110px;height:32px;box-sizing:border-box;border:1px solid #b4b6b8;border-bottom-color:#a9abad;border-radius:3px;background:linear-gradient(#f2f3f2,#e8eae9);box-shadow:0 1px 1px rgba(0,0,0,0.08);line-height:30px;text-align:center;letter-spacing:-0.242px;padding-top:1px">F2 Rename</div>
<div style="position:absolute;left:112px;top:545px;width:110px;height:32px;box-sizing:border-box;border:1px solid #b4b6b8;border-bottom-color:#a9abad;border-radius:3px;background:linear-gradient(#f2f3f2,#e8eae9);box-shadow:0 1px 1px rgba(0,0,0,0.08);line-height:30px;text-align:center;letter-spacing:-0.354px;padding-top:1px">F3 View</div>
<div style="position:absolute;left:224px;top:545px;width:110px;height:32px;box-sizing:border-box;border:1px solid #b4b6b8;border-bottom-color:#a9abad;border-radius:3px;background:linear-gradient(#f2f3f2,#e8eae9);box-shadow:0 1px 1px rgba(0,0,0,0.08);line-height:30px;text-align:center;letter-spacing:-0.277px;padding-top:1px">F4 Edit</div>
<div style="position:absolute;left:336px;top:545px;width:110px;height:32px;box-sizing:border-box;border:1px solid #b4b6b8;border-bottom-color:#a9abad;border-radius:3px;background:linear-gradient(#f2f3f2,#e8eae9);box-shadow:0 1px 1px rgba(0,0,0,0.08);line-height:30px;text-align:center;letter-spacing:-0.357px;padding-top:1px">F5 Copy</div>
<div style="position:absolute;left:447px;top:545px;width:110px;height:32px;box-sizing:border-box;border:1px solid #b4b6b8;border-bottom-color:#a9abad;border-radius:3px;background:linear-gradient(#f2f3f2,#e8eae9);box-shadow:0 1px 1px rgba(0,0,0,0.08);line-height:30px;text-align:center;letter-spacing:-0.138px;padding-top:1px">F6 Move</div>
<div style="position:absolute;left:558px;top:545px;width:110px;height:32px;box-sizing:border-box;border:1px solid #b4b6b8;border-bottom-color:#a9abad;border-radius:3px;background:linear-gradient(#f2f3f2,#e8eae9);box-shadow:0 1px 1px rgba(0,0,0,0.08);line-height:30px;text-align:center;letter-spacing:0.163px;padding-top:1px">F7 Mkdir</div>
<div style="position:absolute;left:670px;top:545px;width:110px;height:32px;box-sizing:border-box;border:1px solid #b4b6b8;border-bottom-color:#a9abad;border-radius:3px;background:linear-gradient(#f2f3f2,#e8eae9);box-shadow:0 1px 1px rgba(0,0,0,0.08);line-height:30px;text-align:center;letter-spacing:-0.101px;padding-top:1px">F8 Delete</div>
<div style="position:absolute;left:782px;top:545px;width:110px;height:32px;box-sizing:border-box;border:1px solid #b4b6b8;border-bottom-color:#a9abad;border-radius:3px;background:linear-gradient(#f2f3f2,#e8eae9);box-shadow:0 1px 1px rgba(0,0,0,0.08);line-height:30px;text-align:center;letter-spacing:-0.157px;padding-top:1px">F9 Term</div>
<div style="position:absolute;left:893px;top:545px;width:110px;height:32px;box-sizing:border-box;border:1px solid #b4b6b8;border-bottom-color:#a9abad;border-radius:3px;background:linear-gradient(#f2f3f2,#e8eae9);box-shadow:0 1px 1px rgba(0,0,0,0.08);line-height:30px;text-align:center;letter-spacing:-0.019px;padding-top:1px">F10 Quit</div>
</div></body></html>
